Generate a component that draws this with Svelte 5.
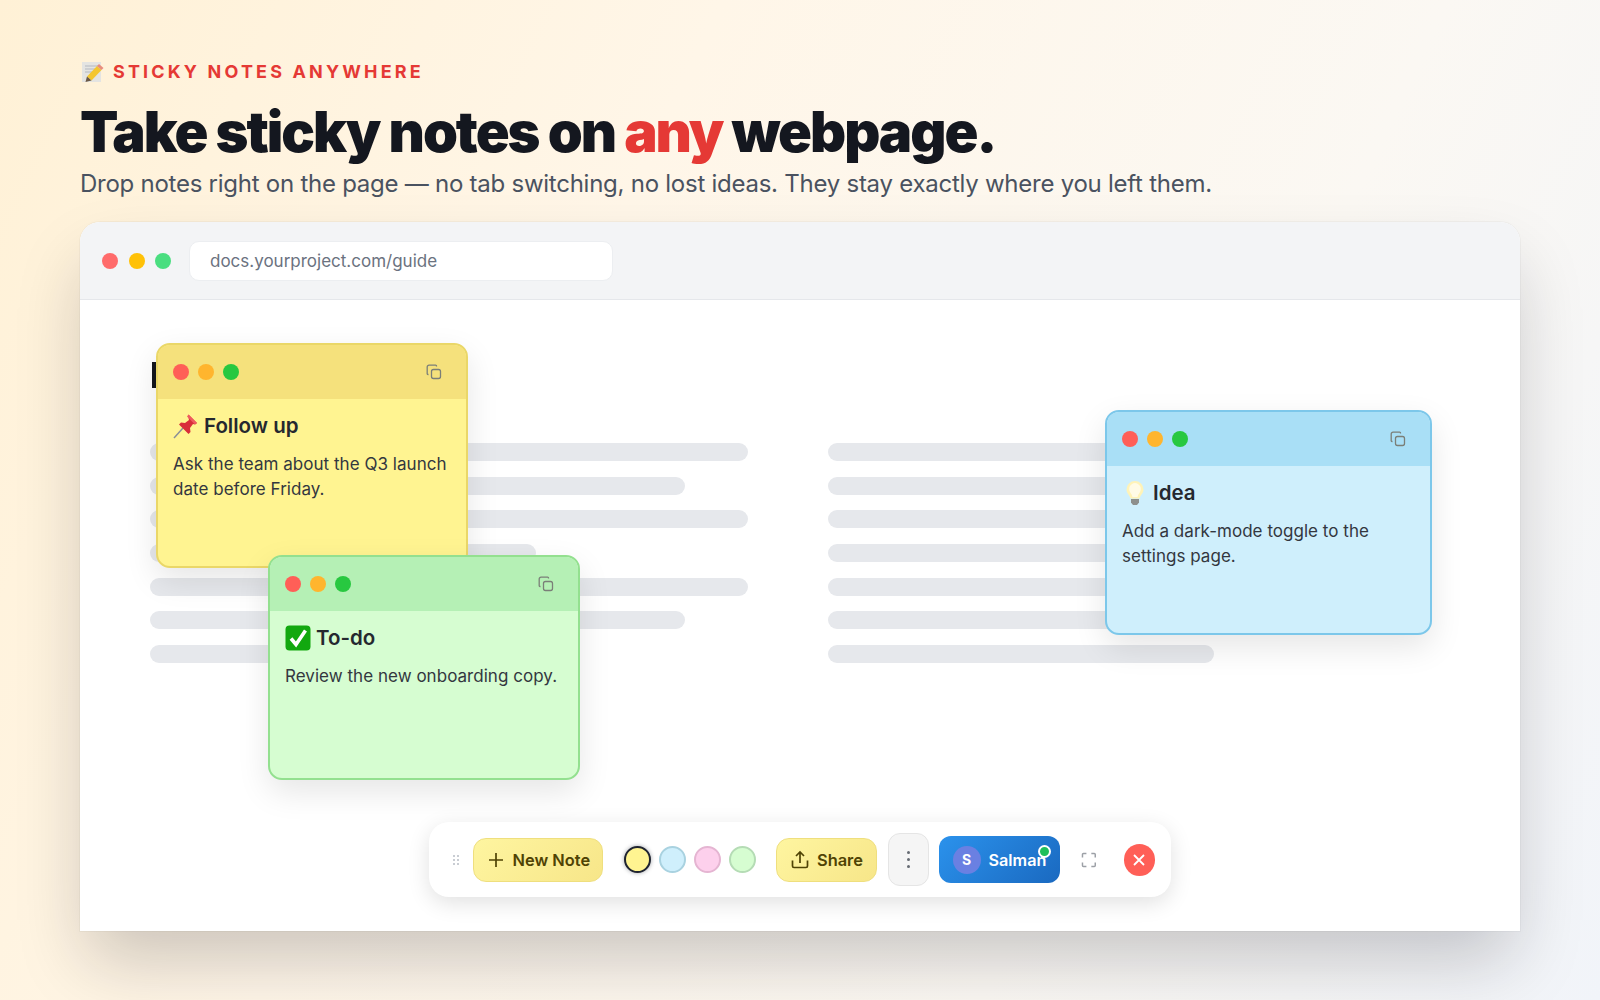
<script lang="ts">
    type Note = {
        id: string;
        title: string;
        text: string;
        icon: "pin" | "check" | "bulb";
    };

    const notes: Note[] = [
        { id: "yellow", title: "Follow up", text: "Ask the team about the Q3 launch date before Friday.", icon: "pin" },
        { id: "green", title: "To-do", text: "Review the new onboarding copy.", icon: "check" },
        { id: "blue", title: "Idea", text: "Add a dark-mode toggle to the settings page.", icon: "bulb" },
    ];

    const lines = ["full", "mid", "full", "short", "full", "mid", "short"];
    const swatches = ["yellow", "blue", "pink", "green"];
</script>

<div class="page">
    <div class="eyebrow">
        <svg class="memo" viewBox="0 0 24 24" width="24" height="24" aria-hidden="true">
            <rect x="2" y="3" width="19" height="20" fill="#e4e4e2" />
            <path d="M5 7h13M5 10h10M5 13h7" stroke="#b4b8c0" stroke-width="1" />
            <path d="M7 17.500 17 7l4.500 4L11.500 21.500z" fill="#f4c62f" />
            <path d="M17 7l2-2 4.500 4-2 2z" fill="#e88d7e" />
            <path d="M7 17.500l4.500 4L5.500 23z" fill="#6b5846" />
        </svg>
        <span>STICKY NOTES ANYWHERE</span>
    </div>
    <h1>Take sticky notes on <em>any</em> webpage.</h1>
    <p class="subtitle">Drop notes right on the page — no tab switching, no lost ideas. They stay exactly where you left them.</p>

    <div class="browser">
        <div class="chrome">
            <div class="lights">
                <span class="red"></span>
                <span class="amber"></span>
                <span class="mint"></span>
            </div>
            <div class="address">docs.yourproject.com/guide</div>
        </div>

        <div class="viewport">
            <div class="mark"></div>
            <div class="columns">
                {#each [0, 1] as col (col)}
                    <div class="column">
                        {#each lines as line, i (i)}
                            <div class={`line ${line}`}></div>
                        {/each}
                    </div>
                {/each}
            </div>

            {#each notes as note (note.id)}
                <article class={`note ${note.id}`}>
                    <header>
                        <i class="dot close"></i>
                        <i class="dot min"></i>
                        <i class="dot max"></i>
                        <svg class="copy" viewBox="0 0 16 16" width="16" height="16" aria-hidden="true">
                            <rect x="5.500" y="5.500" width="9" height="9" rx="2" />
                            <path d="M10.500 2.500V2a.8.8 0 0 0-.8-.8H3a1.800 1.800 0 0 0-1.800 1.800v6.700a.8.8 0 0 0 .8.8h.5" />
                        </svg>
                    </header>
                    <div class="note-body">
                        <h3>
                            {#if note.icon === "pin"}
                                <svg viewBox="0 0 26 26" width="26" height="26" aria-hidden="true">
                                    <path d="M1 25 10 15" stroke="#8a8f98" stroke-width="1.500" />
                                    <path d="M15.500 1.500 24 10l-2 1.500-2-.5-3 4 .5 4-2 2L6 11.500l2-2 4 .5 4-3-.5-2z" fill="#d92d3a" />
                                    <path d="M15.500 1.500 24 10l-2 1.500-8-8z" fill="#ef5a5f" />
                                </svg>
                            {:else if note.icon === "check"}
                                <svg viewBox="0 0 26 26" width="26" height="26" aria-hidden="true">
                                    <rect x="0.500" y="0.500" width="25" height="25" rx="4" fill="#12a80f" />
                                    <path d="M6 13.500l5 6L20.500 5.500" fill="none" stroke="#fff" stroke-width="3.600" />
                                </svg>
                            {:else}
                                <svg viewBox="0 0 26 26" width="26" height="26" aria-hidden="true">
                                    <path d="M13 1a8.500 8.500 0 0 0-8.500 8.500c0 3.500 3 5.500 4 9h9c1-3.500 4-5.500 4-9A8.500 8.500 0 0 0 13 1z" fill="#fff3b8" />
                                    <path d="M13 3a6 6 0 0 0-5 9c1 1.500 2 3 2.500 5h5c.5-2 1.500-3.500 2.500-5a6 6 0 0 0-5-9z" fill="#fffbe6" />
                                    <path d="M9 19h8v3.500l-2 2.500h-4l-2-2.500z" fill="#8d8f8c" />
                                </svg>
                            {/if}
                            <span>{note.title}</span>
                        </h3>
                        <p>{note.text}</p>
                    </div>
                </article>
            {/each}

            <div class="toolbar">
                <span class="grip"></span>
                <button class="pill new" type="button">
                    <svg viewBox="0 0 20 20" width="20" height="20" aria-hidden="true"><path d="M10 3v14M3 10h14" /></svg>
                    New Note
                </button>
                <div class="swatches">
                    {#each swatches as s, i (s)}
                        <span class={`swatch ${s} ${i === 0 ? "active" : ""}`}></span>
                    {/each}
                </div>
                <button class="pill share" type="button">
                    <svg viewBox="0 0 20 20" width="20" height="20" aria-hidden="true">
                        <path d="M10 13V2.500M6 6l4-4 4 4M2.500 10.500V16a1.500 1.500 0 0 0 1.500 1.500h12a1.500 1.500 0 0 0 1.500-1.500v-5.500" />
                    </svg>
                    Share
                </button>
                <button class="more" type="button" aria-label="More">
                    <span></span><span></span><span></span>
                </button>
                <button class="user" type="button">
                    <span class="avatar">S</span>
                    Salman
                    <span class="online"></span>
                </button>
                <svg class="expand" viewBox="0 0 16 16" width="16" height="16" aria-hidden="true">
                    <path d="M1.500 5.500v-3a1 1 0 0 1 1-1h3M10.500 1.500h3a1 1 0 0 1 1 1v3M14.500 10.500v3a1 1 0 0 1-1 1h-3M5.500 14.500h-3a1 1 0 0 1-1-1v-3" />
                </svg>
                <button class="dismiss" type="button" aria-label="Close">
                    <svg viewBox="0 0 14 14" width="14" height="14" aria-hidden="true"><path d="M2 2l10 10M12 2 2 12" /></svg>
                </button>
            </div>
        </div>
    </div>
</div>

<style>
    :global(body) {
        margin: 0;
        font-family: Inter, "Liberation Sans", sans-serif;
    }

    .page {
        box-sizing: border-box;
        width: 1600px;
        height: 1000px;
        padding: 59px 80px 0;
        overflow: hidden;
        background: linear-gradient(115deg, #fff1d6 0%, #fff6e8 35%, #fbf8f3 70%, #f1f4f9 100%);
    }

    .eyebrow {
        display: flex;
        align-items: center;
        gap: 9px;
        height: 24px;
        color: #e53935;
        font-size: 18px;
        font-weight: 700;
        letter-spacing: 0.175em;
    }

    h1 {
        margin: 15px 0 0;
        color: #14171f;
        font-size: 56px;
        font-weight: 900;
        line-height: 68px;
        letter-spacing: -0.036em;
    }

    h1 em {
        color: #e53935;
        font-style: normal;
    }

    .subtitle {
        margin: 2px 0 0;
        color: #4a5260;
        font-size: 24px;
        line-height: 32px;
        letter-spacing: -0.0105em;
    }

    .browser {
        width: 1440px;
        margin-top: 22px;
        border-radius: 20px 20px 0 0;
        background: #fff;
        box-shadow: 0 36px 70px -8px rgba(20, 20, 30, 0.22), 0 0 0 1px rgba(0, 0, 0, 0.03);
    }

    .chrome {
        display: flex;
        align-items: center;
        gap: 18px;
        box-sizing: border-box;
        height: 78px;
        padding: 0 22px;
        border-bottom: 1px solid #e5e7eb;
        border-radius: 20px 20px 0 0;
        background: #f3f4f6;
    }

    .lights {
        display: flex;
        gap: 10.500px;
    }

    .lights span {
        width: 16px;
        height: 16px;
        border-radius: 50%;
    }

    .red { background: #ff6b6b; }
    .amber { background: #ffc107; }
    .mint { background: #4ade80; }

    .address {
        box-sizing: border-box;
        width: 424px;
        height: 40px;
        padding: 0 20px;
        border: 1px solid #eceef1;
        border-radius: 10px;
        background: #fff;
        color: #6b7280;
        font-size: 17px;
        line-height: 38px;
    }

    .viewport {
        position: relative;
        box-sizing: border-box;
        height: 631px;
        padding: 62px 70px 0;
    }

    .mark {
        width: 5px;
        height: 26px;
        margin-left: 2px;
        background: #14171f;
    }

    .columns {
        display: flex;
        gap: 80px;
        margin-top: 55px;
    }

    .column {
        display: flex;
        flex-direction: column;
        gap: 15.700px;
        width: 598px;
    }

    .line {
        height: 18px;
        border-radius: 9px;
        background: #e6e8ec;
    }

    .line.full { width: 100%; }
    .line.mid { width: 89.500%; }
    .line.short { width: 64.500%; }

    .note {
        position: absolute;
        box-sizing: border-box;
        width: 312px;
        height: 225px;
        overflow: hidden;
        border: 2px solid;
        border-radius: 14px;
        box-shadow: 0 12px 32px rgba(0, 0, 0, 0.1);
    }

    .note.yellow {
        top: 43px;
        left: 76px;
        border-color: #ead768;
        background: #fff491;
        --head: #f5e17c;
    }

    .note.green {
        top: 255px;
        left: 188px;
        border-color: #93e08f;
        background: #d6fdd1;
        --head: #b5f0b5;
    }

    .note.blue {
        top: 110px;
        left: 1025px;
        width: 327px;
        border-color: #7cc7ea;
        background: #cfeffc;
        --head: #a9dff6;
    }

    .note header {
        display: flex;
        align-items: center;
        gap: 9px;
        height: 54px;
        padding: 0 15px;
        background: var(--head);
    }

    .dot {
        width: 16px;
        height: 16px;
        border-radius: 50%;
    }

    .dot.close { background: #ff5f57; }
    .dot.min { background: #ffb52e; }
    .dot.max { background: #28c840; }

    .copy {
        margin-left: auto;
        margin-right: 9px;
        fill: none;
        stroke: #7b7f78;
        stroke-width: 1.300;
    }

    .note-body {
        padding: 12px 15px 0;
    }

    .note-body h3 {
        display: flex;
        align-items: center;
        gap: 5px;
        margin: 0;
        color: #25282f;
        font-size: 20.500px;
        font-weight: 600;
        line-height: 30px;
    }

    .note-body p {
        margin: 11px 0 0;
        color: #33373f;
        font-size: 17px;
        line-height: 25px;
        letter-spacing: 0.002em;
    }

    .toolbar {
        position: absolute;
        top: 522px;
        left: 349px;
        display: flex;
        align-items: center;
        box-sizing: border-box;
        width: 742px;
        height: 75px;
        padding: 0 16px 0 23px;
        border-radius: 20px;
        background: #fff;
        box-shadow: 0 6px 22px rgba(0, 0, 0, 0.12);
    }

    .grip {
        width: 7px;
        height: 12px;
        background-image: radial-gradient(circle, #c9cdd3 1.200px, transparent 1.300px);
        background-size: 4px 4px;
    }

    .pill {
        display: flex;
        align-items: center;
        justify-content: center;
        gap: 7px;
        box-sizing: border-box;
        height: 44px;
        padding: 0;
        border: 1px solid #efdf7e;
        border-radius: 13px;
        background: linear-gradient(135deg, #fef5a0, #f7e689);
        color: #4f4304;
        font: 600 16.400px Inter, sans-serif;
    }

    .pill svg {
        fill: none;
        stroke: #4f4304;
        stroke-width: 1.700;
    }

    .pill.new {
        width: 132px;
        margin-left: 14px;
    }

    .swatches {
        display: flex;
        gap: 8px;
        margin-left: 21px;
    }

    .swatch {
        box-sizing: border-box;
        width: 27px;
        height: 27px;
        border: 2px solid;
        border-radius: 50%;
    }

    .swatch.yellow { background: #fff491; }
    .swatch.blue { background: #cfeffc; border-color: #a9d2e0; }
    .swatch.pink { background: #fdd0ec; border-color: #e5b5d2; }
    .swatch.green { background: #d6fdd1; border-color: #b5dcb5; }
    .swatch.active { border-color: #1f2430; box-shadow: 0 0 4px rgba(31, 36, 48, 0.4); }

    .pill.share {
        width: 103px;
        margin-left: 20px;
    }

    .more {
        display: flex;
        flex-direction: column;
        align-items: center;
        justify-content: center;
        gap: 4px;
        box-sizing: border-box;
        width: 41px;
        height: 53px;
        margin-left: 11px;
        padding: 0;
        border: 1px solid #e5e5e5;
        border-radius: 12px;
        background: #f5f5f5;
    }

    .more span {
        width: 3px;
        height: 3px;
        border-radius: 50%;
        background: #666b73;
    }

    .user {
        position: relative;
        display: flex;
        align-items: center;
        gap: 8px;
        box-sizing: border-box;
        width: 123px;
        height: 47px;
        margin-left: 10px;
        padding: 0 0 0 14px;
        border: 0;
        border-radius: 12px;
        background: linear-gradient(135deg, #2b92ec, #1a69c0);
        color: #fff;
        font: 600 16.200px Inter, sans-serif;
    }

    .avatar {
        display: flex;
        align-items: center;
        justify-content: center;
        width: 28px;
        height: 28px;
        border-radius: 50%;
        background: #6a80e2;
        font-size: 14px;
        font-weight: 700;
    }

    .online {
        position: absolute;
        top: 9px;
        left: 99px;
        box-sizing: border-box;
        width: 13px;
        height: 13px;
        border: 2px solid #fff;
        border-radius: 50%;
        background: #1fbf5b;
    }

    .expand {
        margin-left: 21px;
        fill: none;
        stroke: #9ca0a6;
        stroke-width: 1.500;
    }

    .dismiss {
        display: flex;
        align-items: center;
        justify-content: center;
        width: 32px;
        height: 32px;
        margin-left: 27px;
        padding: 0;
        border: 0;
        border-radius: 50%;
        background: #ff5f57;
    }

    .dismiss svg {
        fill: none;
        stroke: #fff;
        stroke-width: 1.800;
    }
</style>
